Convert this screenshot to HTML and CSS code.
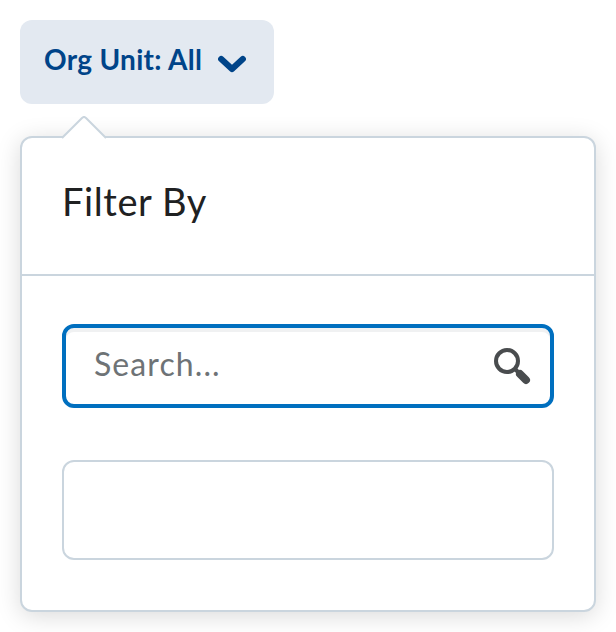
FILE: index.html
```html
<!DOCTYPE html>
<html lang="en">
<head>
<meta charset="utf-8">
<title>Org Unit Filter</title>
<link rel="stylesheet" href="styles.css">
</head>
<body>
<button class="opener" type="button">
  <span>Org Unit: All</span>
  <svg class="chevron" width="28" height="18" viewBox="0 0 28 18"><path d="M3.2 4 L14 14.1 L24.8 4"/></svg>
</button>
<section class="dropdown">
  <svg class="pointer" width="44" height="24" viewBox="0 0 44 24"><path class="pointer-fill" d="M0 24 V22 L20 2 Q22 0 24 2 L44 22 V24 Z"/><path class="pointer-line" d="M0 22 L20 2 Q22 0 24 2 L44 22"/></svg>
  <header class="heading">Filter By</header>
  <div class="content">
    <div class="search">
      <span class="placeholder">Search...</span>
      <svg class="magnifier" width="40" height="40" viewBox="0 0 40 40"><circle cx="15" cy="15" r="11"/><path class="neck" d="M23 23 L27 27"/><path class="handle" d="M28 28 L34 34"/></svg>
    </div>
    <div class="list"></div>
  </div>
</section>
</body>
</html>
```
FILE: styles.css
```css
* { box-sizing: border-box; }
body { margin: 0; padding: 20px; background: #fff; font-family: Lato, sans-serif; overflow: hidden; }
.opener { display: flex; align-items: center; width: 254px; height: 84px; padding: 0 24px; gap: 16px; border: 0; border-radius: 12px; background: #e3e9f1; color: #004489; font: 700 28px/40px Lato, sans-serif; letter-spacing: .3px; white-space: nowrap; }
.opener span { margin-top: -7px; }
.chevron { flex: none; margin-top: 3px; fill: none; stroke: #004489; stroke-width: 6.2; stroke-linecap: round; stroke-linejoin: round; }
.dropdown { position: relative; width: 576px; height: 476px; margin-top: 32px; border: 2px solid #cad5de; border-radius: 12px; background: #fff; box-shadow: 0 4px 24px rgba(0,0,0,.15); }
.pointer { position: absolute; left: 40px; top: -22px; }
.pointer-fill { fill: #fff; }
.pointer-line { fill: none; stroke: #cad5de; stroke-width: 2; }
.heading { height: 138px; padding: 38px 40px; border-bottom: 2px solid #cad5de; color: #202122; font-size: 38px; line-height: 50px; letter-spacing: .6px; }
.content { padding: 48px 40px; }
.search { display: flex; align-items: center; justify-content: space-between; height: 84px; padding: 0 18px 0 28px; border: 4px solid #006fbf; border-radius: 12px; box-shadow: inset 0 4px 0 #f0f1f2; color: #6e7376; font-size: 32px; letter-spacing: 1.1px; }
.placeholder { margin-top: -6px; }
.magnifier { fill: none; stroke: #494c4e; stroke-width: 4; }
.handle { stroke-width: 8; stroke-linecap: round; }
.list { height: 100px; margin-top: 52px; border: 2px solid #cad5de; border-radius: 12px; }
```
